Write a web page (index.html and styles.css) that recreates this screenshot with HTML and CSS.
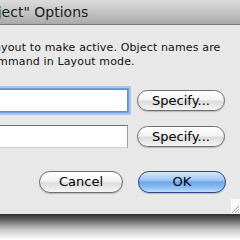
FILE: index.html
```html
<!DOCTYPE html>
<html>
<head>
<meta charset="utf-8">
<link rel="stylesheet" href="styles.css">
</head>
<body>
<div class="window">
  <div class="titlebar"><span class="title">"Go to Object" Options</span></div>
  <div class="message">
    <div class="line line1">layout to make active. Object names are</div>
    <div class="line line2">command in Layout mode.</div>
  </div>
  <div class="row row1">
    <div class="field focused"></div>
    <div class="btn">Specify...</div>
  </div>
  <div class="row row2">
    <div class="field"></div>
    <div class="btn">Specify...</div>
  </div>
  <div class="footer">
    <div class="btn cancel">Cancel</div>
    <div class="btn ok">OK</div>
  </div>
  <div class="grip">
    <svg width="9" height="15" viewBox="0 0 9 15"><path d="M1 14 L8 7 M4 14 L8 10 M7 14 L8 13" stroke="#999" stroke-width="1"/></svg>
  </div>
</div>
<div class="shadow"></div>
</body>
</html>
```
FILE: styles.css
```css
html, body {
  margin: 0;
  padding: 0;
}
body {
  width: 240px;
  height: 240px;
  overflow: hidden;
  background: #ffffff;
  font-family: "DejaVu Sans", "Liberation Sans", sans-serif;
  color: #111;
}
.window {
  position: relative;
  height: 214px;
  background: #e8e8e8;
  display: flex;
  flex-direction: column;
}
.titlebar {
  height: 24px;
  background: linear-gradient(#dcdcdc, #c4c4c4 50%, #a9a9a9);
  border-bottom: 1px solid #7a7a7a;
  overflow: hidden;
  white-space: nowrap;
}
.title {
  display: block;
  margin-left: -71px;
  font-size: 14px;
  line-height: 25px;
  color: #1a1a1a;
}
.message {
  margin-top: 16px;
  font-size: 11px;
  line-height: 14px;
  letter-spacing: 0.14px;
  white-space: nowrap;
}
.line1 { margin-left: -9px; }
.line2 { margin-left: -16px; }
.row {
  display: flex;
  align-items: center;
}
.row1 { margin-top: 20px; }
.row2 { margin-top: 13px; }
.field {
  box-sizing: border-box;
  margin-left: -20px;
  width: 148px;
  height: 23px;
  background: #fff;
  border: 1px solid #9a9a9a;
  border-top-color: #6f6f6f;
  border-bottom-color: #cfcfcf;
}
.field.focused {
  border-color: #5d8fce;
  box-shadow: 0 0 0 1px #6fa1e0, 0 0 0 3px #a9c6ea;
}
.btn {
  box-sizing: border-box;
  height: 21px;
  width: 88px;
  margin-left: 9px;
  border: 1px solid #6e6e6e;
  border-radius: 11px;
  background: linear-gradient(#ffffff, #f4f4f4 45%, #dcdcdc 55%, #f5f5f5);
  box-shadow: 0 1px 1px rgba(0,0,0,0.2);
  font-size: 13px;
  line-height: 19px;
  text-align: center;
  color: #000;
}
.footer {
  display: flex;
  margin-top: 23px;
  margin-left: 39px;
}
.footer .btn {
  height: 22px;
  line-height: 20px;
}
.cancel {
  width: 84px;
  margin-left: 0;
}
.ok {
  width: 88px;
  margin-left: 15px;
  border-color: #30487e;
  background: linear-gradient(#d6e8fb, #9fc7f2 40%, #6ea6e6 52%, #8fc0f4 80%, #bfe0ff);
}
.grip {
  position: absolute;
  right: 0;
  bottom: 0;
  width: 9px;
  height: 15px;
  background: #fbfbfb;
}
.grip svg { display: block; }
.shadow {
  height: 26px;
  background: linear-gradient(#2c2c2c, #6a6a6a 25%, #c8c8c8 60%, #ffffff);
}
```
